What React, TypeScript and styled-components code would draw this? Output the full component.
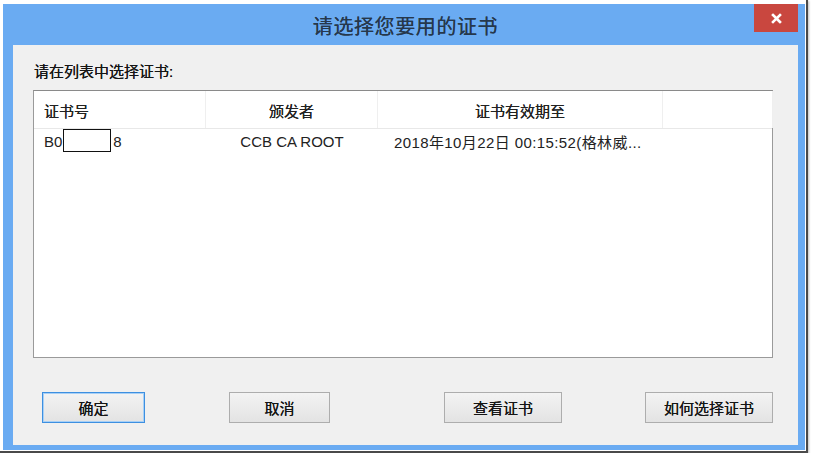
import * as React from 'react';
import styled, { createGlobalStyle } from 'styled-components';

const GlobalStyle = createGlobalStyle`
    html, body {
        margin: 0;
        padding: 0;
        background: #fff;
    }
    body {
        font-family: "Liberation Sans", "Noto Sans CJK SC", sans-serif;
    }
`;

const columns = [
    { title: '证书号', width: 172, align: 'left' },
    { title: '颁发者', width: 172, align: 'center' },
    { title: '证书有效期至', width: 285, align: 'center' },
    { title: '', width: 110, align: 'center' },
];

const buttons = [
    { label: '确定', width: 103, left: 9, primary: true },
    { label: '取消', width: 101, left: 84, primary: false },
    { label: '查看证书', width: 118, left: 114, primary: false },
    { label: '如何选择证书', width: 128, left: 83, primary: false },
];

const CloseIcon = () => (
    <svg width="11" height="11" viewBox="0 0 11 11">
        <path d="M2 2 L9 9 M9 2 L2 9" stroke="#fff" strokeWidth="2.6" strokeLinecap="square" />
    </svg>
);

const App = () => {
    return (
        <>
            <GlobalStyle />
            <Frame>
                <Window>
                    <TitleBar>
                        <span />
                        <Title>请选择您要用的证书</Title>
                        <CloseButton>
                            <CloseIcon />
                        </CloseButton>
                    </TitleBar>
                    <Body>
                        <Label>请在列表中选择证书:</Label>
                        <ListBox>
                            <HeaderRow>
                                {columns.map((col, i) => (
                                    <HeaderCell key={i} $width={col.width} $align={col.align}>
                                        {col.title}
                                    </HeaderCell>
                                ))}
                            </HeaderRow>
                            <Row>
                                <Cell $width={172} $align="left">
                                    B0
                                    <Redacted />
                                    8
                                </Cell>
                                <Cell $width={172} $align="center">
                                    CCB CA ROOT
                                </Cell>
                                <Cell $width={285} $align="left" $pad={16} $spacing={0.4}>
                                    2018年10月22日 00:15:52(格林威...
                                </Cell>
                            </Row>
                        </ListBox>
                        <ButtonRow>
                            {buttons.map((b) => (
                                <Button key={b.label} $width={b.width} $left={b.left} $primary={b.primary}>
                                    {b.label}
                                </Button>
                            ))}
                        </ButtonRow>
                    </Body>
                </Window>
            </Frame>
        </>
    );
};

const Frame = styled.div`
    width: 808px;
    height: 453px;
    padding: 4px 3px 0 3px;
    box-sizing: border-box;
    border-right: 2px solid #4a4a4a;
    border-bottom: 2px solid #4a4a4a;
    box-shadow: 1px 1px 2px rgba(0, 0, 0, 0.25);
`;

const Window = styled.div`
    width: 802px;
    height: 446px;
    box-sizing: border-box;
    background: #6aabf2;
    padding: 0 7px 5px 10px;
    display: flex;
    flex-direction: column;
`;

const TitleBar = styled.div`
    height: 41px;
    flex: none;
    display: grid;
    grid-template-columns: 1fr auto 1fr;
    align-items: center;
`;

const Title = styled.div`
    font-size: 20px;
    color: #26384c;
    letter-spacing: 0.6px;
    padding-top: 2px;
    text-shadow: 0 0 0.4px #26384c;
`;

const CloseButton = styled.div`
    justify-self: end;
    align-self: start;
    width: 44px;
    height: 28px;
    background: #c9473f;
    display: flex;
    align-items: center;
    justify-content: center;
`;

const Body = styled.div`
    flex: 1;
    background: #f0f0f0;
    padding: 16px 25px 0 20px;
    display: flex;
    flex-direction: column;
`;

const Label = styled.div`
    font-size: 15px;
    color: #151515;
    height: 22px;
    line-height: 22px;
    margin-left: 1px;
    margin-bottom: 7px;
    text-shadow: 0 0 0.4px #151515;
`;

const ListBox = styled.div`
    height: 268px;
    box-sizing: border-box;
    background: #fff;
    border: 1px solid #9a9a9a;
    border-top-color: #8a8a8a;
`;

const HeaderRow = styled.div`
    display: flex;
    height: 37px;
    border-bottom: 1px solid #e8e8e8;
`;

const HeaderCell = styled.div<{ $width: number; $align: string }>`
    width: ${(p) => p.$width}px;
    flex: none;
    box-sizing: border-box;
    border-right: 1px solid #efefef;
    padding: 0 10px;
    display: flex;
    align-items: center;
    justify-content: ${(p) => (p.$align === 'left' ? 'flex-start' : 'center')};
    font-size: 15px;
    color: #222;
    padding-top: 2px;
    text-shadow: 0 0 0.4px #222;
`;

const Row = styled.div`
    display: flex;
    height: 24px;
`;

const Cell = styled.div<{ $width: number; $align: string; $pad?: number; $spacing?: number }>`
    width: ${(p) => p.$width}px;
    flex: none;
    box-sizing: border-box;
    padding: 0 ${(p) => p.$pad ?? 10}px;
    display: flex;
    align-items: center;
    justify-content: ${(p) => (p.$align === 'left' ? 'flex-start' : 'center')};
    font-size: 15px;
    letter-spacing: ${(p) => p.$spacing ?? 0}px;
    color: #222;
    white-space: nowrap;
    overflow: hidden;
`;

const Redacted = styled.span`
    display: inline-block;
    width: 46px;
    height: 21px;
    margin: 0 2px 3px 1px;
    border: 1px solid #111;
    background: #fff;
    align-self: flex-start;
`;

const ButtonRow = styled.div`
    display: flex;
    margin-top: 34px;
`;

const Button = styled.div<{ $width: number; $left: number; $primary: boolean }>`
    width: ${(p) => p.$width}px;
    height: 31px;
    margin-left: ${(p) => p.$left}px;
    box-sizing: border-box;
    display: flex;
    align-items: center;
    justify-content: center;
    font-size: 15px;
    color: #151515;
    text-shadow: 0 0 0.4px #151515;
    background: linear-gradient(#f3f3f3, #e3e3e3);
    border: 1px solid ${(p) => (p.$primary ? '#3d8fe0' : '#adadad')};
    box-shadow: ${(p) => (p.$primary ? 'inset 0 0 0 1px #a8d0f6' : 'none')};
`;

export default App;
